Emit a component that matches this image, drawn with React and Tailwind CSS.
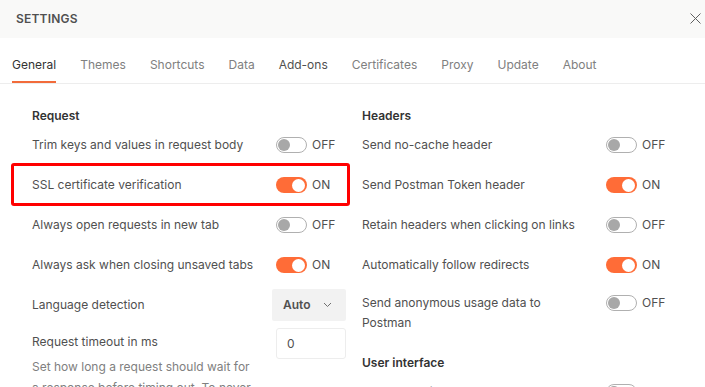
import React from "react";

function Toggle({ on }) {
  return (
    <div className="flex items-center gap-[5px]">
      {on ? (
        <div className="w-[31px] h-[16px] rounded-full bg-[#ff6c37] flex items-center justify-end pr-[2px]">
          <div className="w-[13px] h-[13px] rounded-full bg-white" />
        </div>
      ) : (
        <div className="w-[31px] h-[16px] rounded-full border border-[#b0b0b0] bg-white flex items-center pl-[1px]">
          <div className="w-[12px] h-[12px] rounded-full bg-[#a8a8a8]" />
        </div>
      )}
      <span className="text-[12px] leading-[20px] text-[#505050]">{on ? "ON" : "OFF"}</span>
    </div>
  );
}

function Row({ label, on, children }) {
  return (
    <div className="relative flex items-center h-[40px]">
      <div className="flex-1 text-[12px] leading-[20px] text-[#505050]">{label}</div>
      <div className="w-[74px] pl-[4px]">{children ?? <Toggle on={on} />}</div>
    </div>
  );
}

function Heading({ children }) {
  return <div className="h-[19px] text-[12px] leading-[19px] font-semibold text-[#333333]">{children}</div>;
}

export default function App() {
  const tabs = ["General", "Themes", "Shortcuts", "Data", "Add-ons", "Certificates", "Proxy", "Update", "About"];
  return (
    <div className="w-[705px] h-[387px] overflow-hidden bg-white" style={{ fontFamily: "Inter, 'Noto Sans', sans-serif" }}>
      <div className="h-[38px] bg-[#f9f9f8] flex items-center justify-between pl-[16px] pr-[4px]">
        <span className="text-[12px] font-semibold text-[#505050] tracking-[0.2px]">SETTINGS</span>
        <svg width="11" height="11" viewBox="0 0 11 11" className="-mt-[1px]">
          <path d="M0.5 0.5 L10.5 10.5 M10.5 0.5 L0.5 10.5" stroke="#606060" strokeWidth="1" fill="none" />
        </svg>
      </div>
      <div className="h-[46px] border-b border-[#ededed] flex pl-[12px] gap-[24px]">
        {tabs.map((t, i) => (
          <div
            key={t}
            className={
              "pt-[17px] pb-[6px] text-[12px] leading-[20px] border-b-2 " +
              (i === 0
                ? "border-[#f26b3a] text-[#333333]"
                : t === "Add-ons"
                ? "border-transparent text-[#505050]"
                : "border-transparent text-[#808080]")
            }
          >
            {t}
          </div>
        ))}
      </div>
      <div className="flex pl-[32px] gap-[16px] pt-[22px]">
        <div className="w-[314px]">
          <Heading>Request</Heading>
          <Row label="Trim keys and values in request body" on={false} />
          <div className="relative">
            <Row label="SSL certificate verification" on={true} />
            <div className="absolute left-[-21px] right-[-4px] top-[-2px] bottom-[-1px] border-[3px] border-[#ff0000] rounded-[3px]" />
          </div>
          <Row label="Always open requests in new tab" on={false} />
          <Row label="Always ask when closing unsaved tabs" on={true} />
          <div className="flex items-center h-[40px]">
            <div className="flex-1 text-[12px] leading-[20px] text-[#505050]">Language detection</div>
            <div className="w-[74px] h-[32px] bg-[#f2f2f2] rounded-[2px] flex items-center pl-[11px] pr-[14px] justify-between">
              <span className="text-[12px] font-semibold text-[#505050]">Auto</span>
              <svg width="9" height="6" viewBox="0 0 9 6">
                <path d="M1 1 L4.5 4.5 L8 1" stroke="#707070" strokeWidth="1" fill="none" />
              </svg>
            </div>
          </div>
          <div className="flex items-start pt-[3px]">
            <div className="flex-1">
              <div className="mt-[4px] text-[12px] leading-[20px] text-[#505050]">Request timeout in ms</div>
              <div className="mt-[4px] w-[222px] text-[12px] leading-[21px] text-[#808080]">
                Set how long a request should wait for a response before timing out. To never time out, set to 0.
              </div>
            </div>
            <div className="w-[70px] h-[31px] border border-[#ededed] rounded-[3px] flex items-center pl-[10px] text-[12px] text-[#505050]">
              0
            </div>
          </div>
        </div>
        <div className="w-[314px]">
          <Heading>Headers</Heading>
          <Row label="Send no-cache header" on={false} />
          <Row label="Send Postman Token header" on={true} />
          <Row label="Retain headers when clicking on links" on={false} />
          <Row label="Automatically follow redirects" on={true} />
          <div className="flex items-start pt-[8px] h-[56px]">
            <div className="flex-1 text-[12px] leading-[20px] text-[#505050] pr-[40px]">
              Send anonymous usage data to Postman
            </div>
            <div className="w-[74px] pl-[4px]">
              <Toggle on={false} />
            </div>
          </div>
          <div className="mt-[12px]">
            <Heading>User interface</Heading>
          </div>
          <Row label="Two-pane view" on={false} />
        </div>
      </div>
    </div>
  );
}
